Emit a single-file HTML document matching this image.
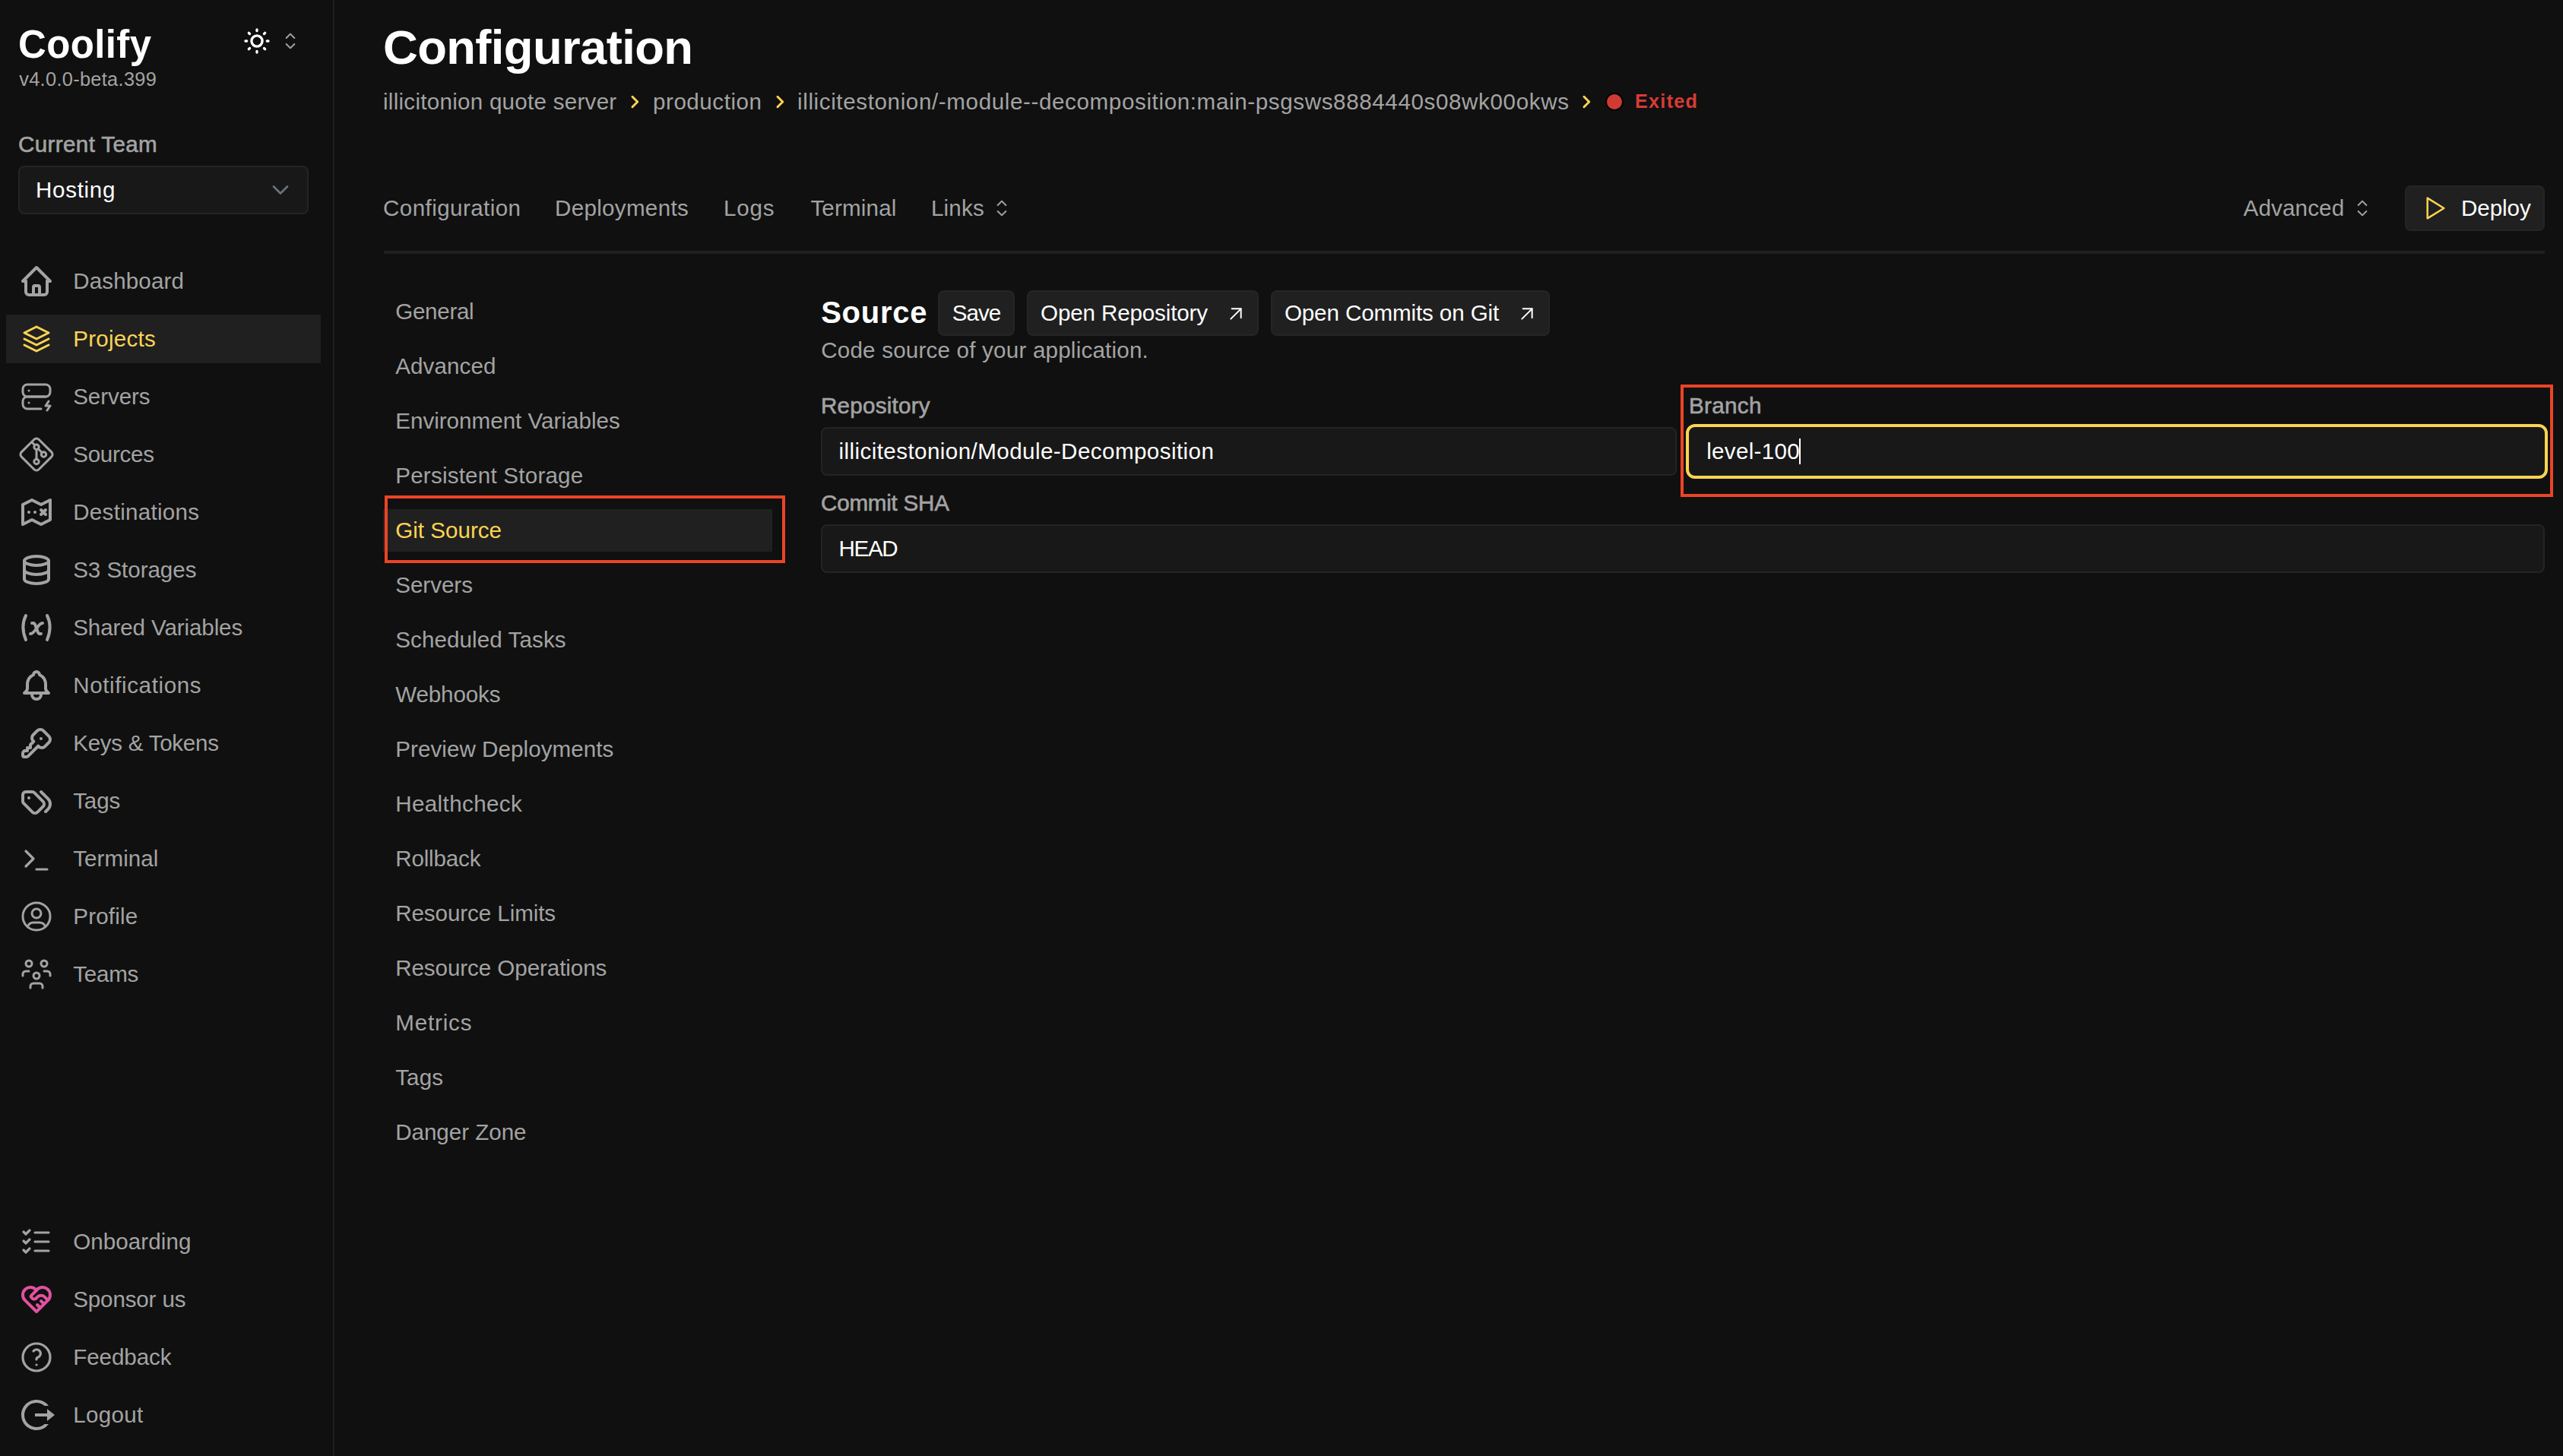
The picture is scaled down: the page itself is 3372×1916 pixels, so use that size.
<!DOCTYPE html>
<html>
<head>
<meta charset="utf-8">
<style>
html,body{margin:0;padding:0;}
body{width:3372px;height:1916px;overflow:hidden;background:#101010;position:relative;font-family:"Liberation Sans",sans-serif;}
.a{position:absolute;}
.t{position:absolute;white-space:nowrap;line-height:1;}
</style>
</head>
<body>
<div class="a" style="left:438px;top:0px;width:2px;height:1916px;background:#202020;"></div>
<div class="t" style="left:24.00px;top:32.62px;font-size:51.00px;color:#ffffff;font-weight:bold;letter-spacing:0.367px;">Coolify</div>
<div class="t" style="left:25.20px;top:92.29px;font-size:25.40px;color:#a3a3a3;letter-spacing:0.300px;">v4.0.0-beta.399</div>
<svg class="a" style="left:318px;top:34px;width:40px;height:40px;" viewBox="0 0 24 24" fill="none" stroke="#ffffff" stroke-width="2" stroke-linecap="round" stroke-linejoin="round"><circle cx="12" cy="12" r="4.25"/><path d="M3 12h1m8 -9v1m8 8h1m-9 8v1m-6.4 -15.4l.7 .7m12.1 -.7l-.7 .7m0 11.4l.7 .7m-12.1 -.7l-.7 .7"/></svg>
<svg class="a" style="left:366px;top:38px;width:32px;height:32px;" viewBox="0 0 24 24" fill="none" stroke="#a3a3a3" stroke-width="1.5" stroke-linecap="round" stroke-linejoin="round"><path d="M8 9l4 -4l4 4"/><path d="M16 15l-4 4l-4 -4"/></svg>
<div class="t" style="left:24.00px;top:175.24px;font-size:29.60px;color:#a3a3a3;letter-spacing:0.364px;-webkit-text-stroke:0.6px #a3a3a3;">Current Team</div>
<div class="a" style="left:24px;top:218px;width:382px;height:64px;border:2px solid #242424;border-radius:8px;background:#181818;box-sizing:border-box;"></div>
<div class="t" style="left:47.00px;top:234.94px;font-size:29.60px;color:#ffffff;letter-spacing:0.667px;">Hosting</div>
<svg class="a" style="left:357px;top:238px;width:24px;height:24px;" viewBox="0 0 24 24" fill="none" stroke="#6b7280" stroke-width="2.6" stroke-linecap="round" stroke-linejoin="round"><path d="M3 7.5l9 9l9 -9"/></svg>
<div class="a" style="left:8px;top:414px;width:414px;height:64px;background:#202020;"></div>
<svg class="a" style="left:24px;top:346px;width:48px;height:48px;" viewBox="0 0 24 24" fill="none" stroke="#a3a3a3" stroke-width="2" stroke-linecap="round" stroke-linejoin="round"><path d="M5 12H3l9-9l9 9h-2"/><path d="M5 12v7a2 2 0 0 0 2 2h10a2 2 0 0 0 2-2v-7"/><path d="M10 21v-5a1 1 0 0 1 1 -1h2a1 1 0 0 1 1 1v5"/></svg>
<div class="t" style="left:96.20px;top:355.34px;font-size:29.60px;color:#a3a3a3;letter-spacing:0.125px;">Dashboard</div>
<svg class="a" style="left:24px;top:422px;width:48px;height:48px;" viewBox="0 0 24 24" fill="none" stroke="#fcd452" stroke-width="1.5" stroke-linecap="round" stroke-linejoin="round"><path d="M12 4l-8 4l8 4l8 -4l-8 -4"/><path d="M4 12l8 4l8 -4"/><path d="M4 16l8 4l8 -4"/></svg>
<div class="t" style="left:96.20px;top:431.34px;font-size:29.60px;color:#fcd452;letter-spacing:0.229px;">Projects</div>
<svg class="a" style="left:24px;top:498px;width:48px;height:48px;" viewBox="0 0 24 24" fill="none" stroke="#a3a3a3" stroke-width="1.5" stroke-linecap="round" stroke-linejoin="round"><path d="M3 7a3 3 0 0 1 3 -3h12a3 3 0 0 1 3 3v2a3 3 0 0 1 -3 3h-12a3 3 0 0 1 -3 -3z"/><path d="M15 20h-9a3 3 0 0 1 -3 -3v-2a3 3 0 0 1 3 -3h12"/><path d="M7 8v.01"/><path d="M7 16v.01"/><path d="M20 15l-2 3h3l-2 3"/></svg>
<div class="t" style="left:96.20px;top:507.34px;font-size:29.60px;color:#a3a3a3;letter-spacing:-0.100px;">Servers</div>
<svg class="a" style="left:24px;top:574px;width:48px;height:48px;" viewBox="0 0 24 24" fill="none" stroke="#a3a3a3" stroke-width="1.5" stroke-linecap="round" stroke-linejoin="round"><path transform="translate(12 12) scale(1.05) translate(-12 -12)" d="M13.446 2.6l7.955 7.954a2.045 2.045 0 0 1 0 2.892l-7.955 7.955a2.045 2.045 0 0 1 -2.892 0l-7.955 -7.955a2.045 2.045 0 0 1 0 -2.892l7.955 -7.955a2.045 2.045 0 0 1 2.892 0z"/><circle cx="12" cy="7.1" r="1.6"/><circle cx="16.75" cy="12" r="1.6"/><circle cx="12" cy="16.75" r="1.6"/><path d="M12 8.7v6.45"/><path d="M13.15 8.25l2.5 2.6"/><path d="M10.9 5.9l-1.6 -1.6"/></svg>
<div class="t" style="left:96.20px;top:583.34px;font-size:29.60px;color:#a3a3a3;letter-spacing:-0.300px;">Sources</div>
<svg class="a" style="left:24px;top:650px;width:48px;height:48px;" viewBox="0 0 24 24" fill="none" stroke="#a3a3a3" stroke-width="2" stroke-linecap="round" stroke-linejoin="round"><path d="M3 7l6 -3l6 3l6 -3v13l-6 3l-6 -3l-6 3v-13"/><path d="M7 12v.01"/><path d="M11 12v.01"/><path d="M15 10.5l3 3m0 -3l-3 3"/></svg>
<div class="t" style="left:96.20px;top:659.34px;font-size:29.60px;color:#a3a3a3;letter-spacing:0.273px;">Destinations</div>
<svg class="a" style="left:24px;top:726px;width:48px;height:48px;" viewBox="0 0 24 24" fill="none" stroke="#a3a3a3" stroke-width="2" stroke-linecap="round" stroke-linejoin="round"><path d="M12 6m-8 0a8 3 0 1 0 16 0a8 3 0 1 0 -16 0"/><path d="M4 6v6a8 3 0 0 0 16 0v-6"/><path d="M4 12v6a8 3 0 0 0 16 0v-6"/></svg>
<div class="t" style="left:96.20px;top:735.34px;font-size:29.60px;color:#a3a3a3;letter-spacing:-0.060px;">S3 Storages</div>
<svg class="a" style="left:24px;top:802px;width:48px;height:48px;" viewBox="0 0 24 24" fill="none" stroke="#a3a3a3" stroke-width="2" stroke-linecap="round" stroke-linejoin="round"><path d="M5 4c-2.5 5 -2.5 10 0 16m14 -16c2.5 5 2.5 10 0 16m-10 -11h1c1 0 1 1 2.016 3.527c.984 2.473 .984 3.473 1.984 3.473h1"/><path d="M8 16c1.5 0 3 -2 4 -3.5s2.5 -3.5 4 -3.5"/></svg>
<div class="t" style="left:96.20px;top:811.34px;font-size:29.60px;color:#a3a3a3;letter-spacing:-0.120px;">Shared Variables</div>
<svg class="a" style="left:24px;top:878px;width:48px;height:48px;" viewBox="0 0 24 24" fill="none" stroke="#a3a3a3" stroke-width="2" stroke-linecap="round" stroke-linejoin="round"><path d="M10 5a2 2 0 1 1 4 0a7 7 0 0 1 4 6v3a4 4 0 0 0 2 3h-16a4 4 0 0 0 2 -3v-3a7 7 0 0 1 4 -6"/><path d="M9 17v1a3 3 0 0 0 6 0v-1"/></svg>
<div class="t" style="left:96.20px;top:887.34px;font-size:29.60px;color:#a3a3a3;letter-spacing:0.600px;">Notifications</div>
<svg class="a" style="left:24px;top:954px;width:48px;height:48px;" viewBox="0 0 24 24" fill="none" stroke="#a3a3a3" stroke-width="2" stroke-linecap="round" stroke-linejoin="round"><path d="M16.555 3.843l3.602 3.602a2.877 2.877 0 0 1 0 4.069l-2.643 2.643a2.877 2.877 0 0 1 -4.069 0l-.301 -.301l-6.558 6.558a2 2 0 0 1 -1.239 .578l-.175 .008h-1.172a1 1 0 0 1 -.993 -.883l-.007 -.117v-1.172a2 2 0 0 1 .467 -1.284l.119 -.13l.414 -.414h2v-2h2v-2l2.144 -2.144l-.301 -.301a2.877 2.877 0 0 1 0 -4.069l2.643 -2.643a2.877 2.877 0 0 1 4.069 0z"/><path d="M15 9h.01"/></svg>
<div class="t" style="left:96.20px;top:963.34px;font-size:29.60px;color:#a3a3a3;letter-spacing:-0.283px;">Keys &amp; Tokens</div>
<svg class="a" style="left:24px;top:1030px;width:48px;height:48px;" viewBox="0 0 24 24" fill="none" stroke="#a3a3a3" stroke-width="2" stroke-linecap="round" stroke-linejoin="round"><path d="M3 8v4.172a2 2 0 0 0 .586 1.414l5.71 5.71a2.41 2.41 0 0 0 3.408 0l3.592 -3.592a2.41 2.41 0 0 0 0 -3.408l-5.71 -5.71a2 2 0 0 0 -1.414 -.586h-4.172a2 2 0 0 0 -2 2z"/><path d="M18 19l1.592 -1.592a4.82 4.82 0 0 0 0 -6.816l-4.592 -4.592"/><path d="M7 10h-.01"/></svg>
<div class="t" style="left:96.20px;top:1039.34px;font-size:29.60px;color:#a3a3a3;letter-spacing:-0.134px;">Tags</div>
<svg class="a" style="left:24px;top:1106px;width:48px;height:48px;" viewBox="0 0 24 24" fill="none" stroke="#a3a3a3" stroke-width="1.6" stroke-linecap="round" stroke-linejoin="round"><path d="M5 7l5 5l-5 5"/><path d="M12 19l7 0"/></svg>
<div class="t" style="left:96.20px;top:1115.34px;font-size:29.60px;color:#a3a3a3;letter-spacing:0.057px;">Terminal</div>
<svg class="a" style="left:24px;top:1182px;width:48px;height:48px;" viewBox="0 0 24 24" fill="none" stroke="#a3a3a3" stroke-width="1.5" stroke-linecap="round" stroke-linejoin="round"><path d="M12 12m-9 0a9 9 0 1 0 18 0a9 9 0 1 0 -18 0"/><path d="M12 10m-3 0a3 3 0 1 0 6 0a3 3 0 1 0 -6 0"/><path d="M6.168 18.849a4 4 0 0 1 3.832 -2.849h4a4 4 0 0 1 3.834 2.855"/></svg>
<div class="t" style="left:96.20px;top:1191.34px;font-size:29.60px;color:#a3a3a3;letter-spacing:0.200px;">Profile</div>
<svg class="a" style="left:24px;top:1258px;width:48px;height:48px;" viewBox="0 0 24 24" fill="none" stroke="#a3a3a3" stroke-width="1.5" stroke-linecap="round" stroke-linejoin="round"><path d="M10 13a2 2 0 1 0 4 0a2 2 0 0 0 -4 0"/><path d="M8 21v-1a2 2 0 0 1 2 -2h4a2 2 0 0 1 2 2v1"/><path d="M15 5a2 2 0 1 0 4 0a2 2 0 0 0 -4 0"/><path d="M17 10h2a2 2 0 0 1 2 2v1"/><path d="M5 5a2 2 0 1 0 4 0a2 2 0 0 0 -4 0"/><path d="M3 13v-1a2 2 0 0 1 2 -2h2"/></svg>
<div class="t" style="left:96.20px;top:1267.34px;font-size:29.60px;color:#a3a3a3;letter-spacing:-0.250px;">Teams</div>
<svg class="a" style="left:24px;top:1610px;width:48px;height:48px;" viewBox="0 0 24 24" fill="none" stroke="#a3a3a3" stroke-width="1.6" stroke-linecap="round" stroke-linejoin="round"><path d="M3.5 5.5l1.5 1.5l2.5 -2.5"/><path d="M3.5 11.5l1.5 1.5l2.5 -2.5"/><path d="M3.5 17.5l1.5 1.5l2.5 -2.5"/><path d="M11 6l9 0"/><path d="M11 12l9 0"/><path d="M11 18l9 0"/></svg>
<div class="t" style="left:96.20px;top:1619.44px;font-size:29.60px;color:#a3a3a3;letter-spacing:0.066px;">Onboarding</div>
<svg class="a" style="left:24px;top:1686px;width:48px;height:48px;" viewBox="0 0 24 24" fill="none" stroke="#e2519f" stroke-width="2" stroke-linecap="round" stroke-linejoin="round"><path d="M19.5 12.572l-7.5 7.428l-7.5 -7.428a5 5 0 1 1 7.5 -6.566a5 5 0 1 1 7.5 6.572"/><path d="M12 6l-3.293 3.293a1 1 0 0 0 0 1.414l.543 .543c.69 .69 1.81 .69 2.5 0l1 -1a3.182 3.182 0 0 1 4.5 0l2.25 2.25"/><path d="M12.5 15.5l2 2"/><path d="M15 13l2 2"/></svg>
<div class="t" style="left:96.20px;top:1695.44px;font-size:29.60px;color:#a3a3a3;letter-spacing:-0.156px;">Sponsor us</div>
<svg class="a" style="left:24px;top:1762px;width:48px;height:48px;" viewBox="0 0 24 24" fill="none" stroke="#a3a3a3" stroke-width="1.6" stroke-linecap="round" stroke-linejoin="round"><path d="M12 12m-9 0a9 9 0 1 0 18 0a9 9 0 1 0 -18 0"/><path d="M12 17l0 .01"/><path d="M12 13.5a1.5 1.5 0 0 1 1 -1.5a2.6 2.6 0 1 0 -3 -4"/></svg>
<div class="t" style="left:96.20px;top:1771.44px;font-size:29.60px;color:#a3a3a3;letter-spacing:-0.086px;">Feedback</div>
<svg class="a" style="left:24px;top:1838px;width:48px;height:48px;" viewBox="0 0 24 24"><path fill="#a3a3a3" d="M12 22C6.477 22 2 17.523 2 12S6.477 2 12 2a9.985 9.985 0 0 1 8 4h-2.71a8 8 0 1 0 .001 12h2.71A9.985 9.985 0 0 1 12 22m7-6v-3h-8v-2h8V8l5 4z"/></svg>
<div class="t" style="left:96.20px;top:1847.44px;font-size:29.60px;color:#a3a3a3;letter-spacing:0.320px;">Logout</div>
<div class="t" style="left:504.00px;top:30.92px;font-size:63.40px;color:#ffffff;font-weight:bold;letter-spacing:-0.617px;">Configuration</div>
<div class="t" style="left:504.00px;top:119.14px;font-size:29.60px;color:#a3a3a3;letter-spacing:0.258px;">illicitonion quote server</div>
<div class="t" style="left:859.00px;top:119.14px;font-size:29.60px;color:#a3a3a3;letter-spacing:0.533px;">production</div>
<div class="t" style="left:1049.00px;top:119.14px;font-size:29.60px;color:#a3a3a3;letter-spacing:0.614px;">illicitestonion/-module--decomposition:main-psgsws8884440s08wk00okws</div>
<svg class="a" style="left:823px;top:122px;width:24px;height:24px;" viewBox="0 0 24 24" fill="none" stroke="#fcd452" stroke-width="3" stroke-linecap="round" stroke-linejoin="round"><path d="M9 5.25l6.75 6.75l-6.75 6.75"/></svg>
<svg class="a" style="left:1013.5px;top:122px;width:24px;height:24px;" viewBox="0 0 24 24" fill="none" stroke="#fcd452" stroke-width="3" stroke-linecap="round" stroke-linejoin="round"><path d="M9 5.25l6.75 6.75l-6.75 6.75"/></svg>
<svg class="a" style="left:2075px;top:122px;width:24px;height:24px;" viewBox="0 0 24 24" fill="none" stroke="#fcd452" stroke-width="3" stroke-linecap="round" stroke-linejoin="round"><path d="M9 5.25l6.75 6.75l-6.75 6.75"/></svg>
<div class="a" style="left:2112px;top:122px;width:20px;height:20px;border:2px solid #000;border-radius:50%;background:#cf3b32;"></div>
<div class="t" style="left:2151.00px;top:121.46px;font-size:25.20px;color:#d93b35;font-weight:bold;letter-spacing:1.280px;">Exited</div>
<div class="t" style="left:504.00px;top:259.14px;font-size:29.60px;color:#a3a3a3;letter-spacing:0.417px;">Configuration</div>
<div class="t" style="left:730.00px;top:259.14px;font-size:29.60px;color:#a3a3a3;letter-spacing:0.300px;">Deployments</div>
<div class="t" style="left:952.00px;top:259.14px;font-size:29.60px;color:#a3a3a3;letter-spacing:0.800px;">Logs</div>
<div class="t" style="left:1066.40px;top:259.14px;font-size:29.60px;color:#a3a3a3;letter-spacing:0.171px;">Terminal</div>
<div class="t" style="left:1225.00px;top:259.14px;font-size:29.60px;color:#a3a3a3;letter-spacing:0.150px;">Links</div>
<svg class="a" style="left:1302px;top:258px;width:32px;height:32px;" viewBox="0 0 24 24" fill="none" stroke="#a3a3a3" stroke-width="1.5" stroke-linecap="round" stroke-linejoin="round"><path d="M8 9l4 -4l4 4"/><path d="M16 15l-4 4l-4 -4"/></svg>
<div class="t" style="left:2951.50px;top:259.14px;font-size:29.60px;color:#a3a3a3;letter-spacing:0.143px;">Advanced</div>
<svg class="a" style="left:3092px;top:258px;width:32px;height:32px;" viewBox="0 0 24 24" fill="none" stroke="#a3a3a3" stroke-width="1.5" stroke-linecap="round" stroke-linejoin="round"><path d="M8 9l4 -4l4 4"/><path d="M16 15l-4 4l-4 -4"/></svg>
<div class="a" style="left:3164px;top:244px;width:184px;height:60px;background:#202020;border:2px solid #252525;border-radius:8px;box-sizing:border-box;"></div>
<svg class="a" style="left:3182px;top:254px;width:40px;height:40px;" viewBox="0 0 24 24" fill="none" stroke="#fcd452" stroke-width="1.5" stroke-linecap="round" stroke-linejoin="round"><path d="M7 4v16l13 -8z"/></svg>
<div class="t" style="left:3238.00px;top:259.14px;font-size:29.60px;color:#ffffff;letter-spacing:-0.080px;">Deploy</div>
<div class="a" style="left:505px;top:330px;width:2843px;height:4px;background:#202020;"></div>
<div class="a" style="left:504px;top:670px;width:512px;height:56px;background:#202020;"></div>
<div class="t" style="left:520.20px;top:395.24px;font-size:29.60px;color:#a3a3a3;letter-spacing:-0.300px;">General</div>
<div class="t" style="left:520.20px;top:467.24px;font-size:29.60px;color:#a3a3a3;letter-spacing:0.085px;">Advanced</div>
<div class="t" style="left:520.20px;top:539.24px;font-size:29.60px;color:#a3a3a3;">Environment Variables</div>
<div class="t" style="left:520.20px;top:611.24px;font-size:29.60px;color:#a3a3a3;letter-spacing:0.212px;">Persistent Storage</div>
<div class="t" style="left:520.20px;top:683.24px;font-size:29.60px;color:#fcd452;">Git Source</div>
<div class="t" style="left:520.20px;top:755.24px;font-size:29.60px;color:#a3a3a3;letter-spacing:-0.033px;">Servers</div>
<div class="t" style="left:520.20px;top:827.24px;font-size:29.60px;color:#a3a3a3;letter-spacing:0.086px;">Scheduled Tasks</div>
<div class="t" style="left:520.20px;top:899.24px;font-size:29.60px;color:#a3a3a3;letter-spacing:-0.143px;">Webhooks</div>
<div class="t" style="left:520.20px;top:971.24px;font-size:29.60px;color:#a3a3a3;letter-spacing:0.056px;">Preview Deployments</div>
<div class="t" style="left:520.20px;top:1043.24px;font-size:29.60px;color:#a3a3a3;letter-spacing:0.380px;">Healthcheck</div>
<div class="t" style="left:520.20px;top:1115.24px;font-size:29.60px;color:#a3a3a3;letter-spacing:-0.171px;">Rollback</div>
<div class="t" style="left:520.20px;top:1187.24px;font-size:29.60px;color:#a3a3a3;letter-spacing:-0.085px;">Resource Limits</div>
<div class="t" style="left:520.20px;top:1259.24px;font-size:29.60px;color:#a3a3a3;letter-spacing:-0.078px;">Resource Operations</div>
<div class="t" style="left:520.20px;top:1331.24px;font-size:29.60px;color:#a3a3a3;letter-spacing:0.833px;">Metrics</div>
<div class="t" style="left:520.20px;top:1403.24px;font-size:29.60px;color:#a3a3a3;letter-spacing:0.134px;">Tags</div>
<div class="t" style="left:520.20px;top:1475.24px;font-size:29.60px;color:#a3a3a3;letter-spacing:-0.040px;">Danger Zone</div>
<div class="t" style="left:1080.20px;top:391.43px;font-size:40.00px;color:#ffffff;font-weight:bold;letter-spacing:0.720px;">Source</div>
<div class="a" style="left:1234px;top:382px;width:101px;height:60px;background:#202020;border:2px solid #252525;border-radius:8px;box-sizing:border-box;"></div>
<div class="a" style="left:1351px;top:382px;width:305px;height:60px;background:#202020;border:2px solid #252525;border-radius:8px;box-sizing:border-box;"></div>
<div class="a" style="left:1672px;top:382px;width:367px;height:60px;background:#202020;border:2px solid #252525;border-radius:8px;box-sizing:border-box;"></div>
<div class="t" style="left:1252.80px;top:397.14px;font-size:29.60px;color:#ffffff;letter-spacing:-1.000px;">Save</div>
<div class="t" style="left:1369.00px;top:397.14px;font-size:29.60px;color:#ffffff;letter-spacing:-0.143px;">Open Repository</div>
<div class="t" style="left:1689.90px;top:397.14px;font-size:29.60px;color:#ffffff;letter-spacing:-0.122px;">Open Commits on Git</div>
<svg class="a" style="left:1609.7px;top:397px;width:32px;height:32px;" viewBox="0 0 24 24" fill="none" stroke="#ffffff" stroke-width="1.5" stroke-linecap="round" stroke-linejoin="round"><path d="M17 7l-10 10"/><path d="M8 7l9 0l0 9"/></svg>
<svg class="a" style="left:1992.9px;top:397px;width:32px;height:32px;" viewBox="0 0 24 24" fill="none" stroke="#ffffff" stroke-width="1.5" stroke-linecap="round" stroke-linejoin="round"><path d="M17 7l-10 10"/><path d="M8 7l9 0l0 9"/></svg>
<div class="t" style="left:1080.20px;top:446.44px;font-size:29.60px;color:#a3a3a3;letter-spacing:0.200px;">Code source of your application.</div>
<div class="t" style="left:1080.00px;top:519.34px;font-size:29.60px;color:#a3a3a3;letter-spacing:0.244px;-webkit-text-stroke:0.6px #a3a3a3;">Repository</div>
<div class="t" style="left:2222.00px;top:519.34px;font-size:29.60px;color:#a3a3a3;letter-spacing:0.320px;-webkit-text-stroke:0.6px #a3a3a3;">Branch</div>
<div class="t" style="left:1080.00px;top:647.44px;font-size:29.60px;color:#a3a3a3;letter-spacing:-0.222px;-webkit-text-stroke:0.6px #a3a3a3;">Commit SHA</div>
<div class="a" style="left:1080px;top:562px;width:1126px;height:64px;background:#181818;border:2px solid #242424;border-radius:8px;box-sizing:border-box;"></div>
<div class="a" style="left:2218px;top:558px;width:1134px;height:72px;background:#181818;border:4px solid #fcd452;border-radius:12px;box-sizing:border-box;"></div>
<div class="a" style="left:1080px;top:690px;width:2268px;height:64px;background:#181818;border:2px solid #242424;border-radius:8px;box-sizing:border-box;"></div>
<div class="t" style="left:1103.50px;top:579.04px;font-size:29.60px;color:#ffffff;letter-spacing:0.422px;">illicitestonion/Module-Decomposition</div>
<div class="t" style="left:2245.20px;top:579.04px;font-size:29.60px;color:#ffffff;letter-spacing:0.300px;">level-100</div>
<div class="a" style="left:2367px;top:577px;width:2px;height:34px;background:#ffffff;"></div>
<div class="t" style="left:1103.50px;top:707.14px;font-size:29.60px;color:#ffffff;letter-spacing:-1.333px;">HEAD</div>
<div class="a" style="left:506px;top:652px;width:527px;height:89px;border:4px solid #eb4427;box-sizing:border-box;"></div>
<div class="a" style="left:2211px;top:506px;width:1148px;height:148px;border:4px solid #eb4427;box-sizing:border-box;"></div>
</body>
</html>
